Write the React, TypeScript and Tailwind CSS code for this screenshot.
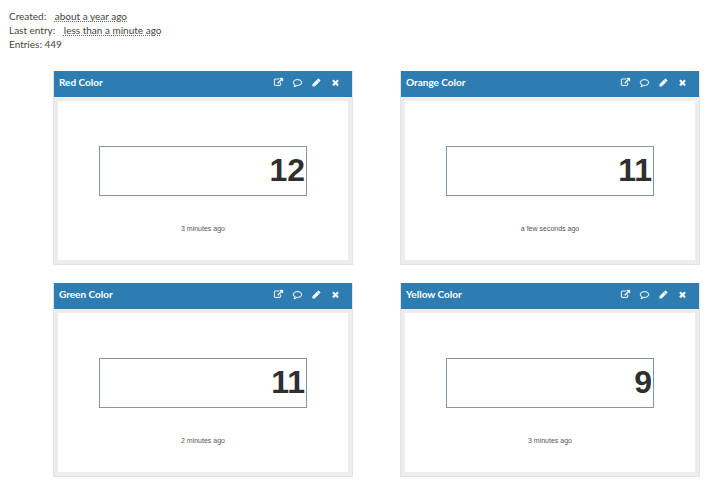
import type { ReactNode } from 'react';

const feeds = [
  { id: 1, name: 'Red Color', value: 12, updated: '3 minutes ago' },
  { id: 2, name: 'Orange Color', value: 11, updated: 'a few seconds ago' },
  { id: 3, name: 'Green Color', value: 11, updated: '2 minutes ago' },
  { id: 4, name: 'Yellow Color', value: 9, updated: '3 minutes ago' },
];

const actions = [
  {
    label: 'Open',
    path: 'M1408 928v320q0 119-84.5 203.5t-203.5 84.5h-832q-119 0-203.5-84.5t-84.5-203.5v-832q0-119 84.5-203.5t203.5-84.5h704q14 0 23 9t9 23v64q0 14-9 23t-23 9h-704q-66 0-113 47t-47 113v832q0 66 47 113t113 47h832q66 0 113-47t47-113v-320q0-14 9-23t23-9h64q14 0 23 9t9 23zm384-864v512q0 26-19 45t-45 19-45-19l-176-176-652 652q-10 10-23 10t-23-10l-114-114q-10-10-10-23t10-23l652-652-176-176q-19-19-19-45t19-45 45-19h512q26 0 45 19t19 45z',
  },
  {
    label: 'Comment',
    path: 'M896 384q-204 0-381.5 69.5t-282 187.5-104.5 255q0 112 71.5 213.5t201.5 175.5l87 50-27 96q-24 91-70 172 152-63 275-171l43-38 57 6q69 8 130 8 204 0 381.5-69.5t282-187.5 104.5-255-104.5-255-282-187.5-381.5-69.5zm896 512q0 174-120 321.5t-326 233-450 85.5q-70 0-145-8-198 175-460 242-49 14-114 22h-5q-15 0-27-10.5t-16-27.5v-1q-3-4-.5-12t2-10 4.5-9.5l6-9 7-8.5 8-9q7-8 31-34.5t34.5-38 31-39.5 32.5-51 27-59 26-76q-157-89-247.5-220t-90.5-281q0-174 120-321.5t326-233 450-85.5 450 85.5 326 233 120 321.5z',
  },
  {
    label: 'Edit',
    path: 'M960 416l416 416-832 832h-416v-416zm683 96q0 53-37 90l-166 166-416-416 166-165q36-38 90-38 53 0 91 38l235 234q37 39 37 91z',
  },
  {
    label: 'Remove',
    path: 'M1490 1322q0 40-28 68l-136 136q-28 28-68 28t-68-28l-294-294-294 294q-28 28-68 28t-68-28l-136-136q-28-28-28-68t28-68l294-294-294-294q-28-28-28-68t28-68l136-136q28-28 68-28t68 28l294 294 294-294q28-28 68-28t68 28l136 136q28 28 28 68t-28 68l-294 294 294 294q28 28 28 68z',
  },
];

function Since({ children }: { children: ReactNode }) {
  return (
    <span className="ml-1.5 underline decoration-[#666] decoration-dotted decoration-1 underline-offset-1">
      {children}
    </span>
  );
}

function Widget({ name, value, updated }: { name: string; value: number; updated: string }) {
  return (
    <section className="border border-t-0 border-[#e3e3e3]">
      <header className="flex h-[26px] items-center justify-between bg-[#2d7db3] pr-3 pb-1 pl-[5px] text-white">
        <h2 className="text-[10px] font-bold">{name}</h2>
        <div className="flex gap-[10px]">
          {actions.map((action) => (
            <button key={action.label} type="button" aria-label={action.label} className="cursor-pointer">
              <svg
                viewBox="0 0 1792 1792"
                className="size-[9px] overflow-visible"
                fill="currentColor"
                stroke="currentColor"
                strokeWidth="60"
              >
                <path d={action.path} />
              </svg>
            </button>
          ))}
        </div>
      </header>
      <div className="border-4 border-[#ededed] bg-white px-[41px] pt-[45px] pb-[26px] font-['Liberation_Sans',sans-serif]">
        <div className="h-[50px] border border-[#8593a6] pr-px text-right text-[32px] leading-[46px] font-bold text-[#2f2f2f]">
          {value}
        </div>
        <p className="mt-7 text-center text-[7px] leading-[10px] text-[#555]">{updated}</p>
      </div>
    </section>
  );
}

export default function App() {
  return (
    <main className="min-h-screen bg-white pt-[9px] pb-2 font-[Lato,sans-serif]">
      <div className="px-[9px] text-[10px] leading-[14px] text-[#444]">
        <p>Created: <Since>about a year ago</Since></p>
        <p>Last entry: <Since>less than a minute ago</Since></p>
        <p>Entries: 449</p>
      </div>

      {/* Channel widgets */}
      <div className="mt-5 grid grid-cols-2 gap-x-[47px] gap-y-[18px] pr-[11px] pl-[53px]">
        {feeds.map((feed) => (
          <Widget key={feed.id} name={feed.name} value={feed.value} updated={feed.updated} />
        ))}
      </div>
    </main>
  );
}
